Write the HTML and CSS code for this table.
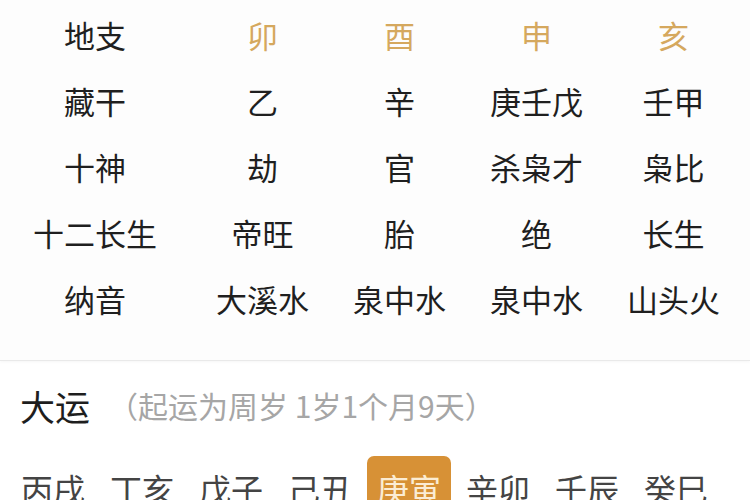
FILE: index.html
```html
<!DOCTYPE html>
<html lang="zh-CN">
<head>
<meta charset="utf-8">
<link rel="stylesheet" href="styles.css">
</head>
<body>
<section class="chart">
  <div class="grid">
    <div class="label">地支</div><div class="cell gold">卯</div><div class="cell gold">酉</div><div class="cell gold">申</div><div class="cell gold">亥</div>
    <div class="label">藏干</div><div class="cell">乙</div><div class="cell">辛</div><div class="cell">庚壬戊</div><div class="cell">壬甲</div>
    <div class="label">十神</div><div class="cell">劫</div><div class="cell">官</div><div class="cell">杀枭才</div><div class="cell">枭比</div>
    <div class="label">十二长生</div><div class="cell">帝旺</div><div class="cell">胎</div><div class="cell">绝</div><div class="cell">长生</div>
    <div class="label">纳音</div><div class="cell">大溪水</div><div class="cell">泉中水</div><div class="cell">泉中水</div><div class="cell">山头火</div>
  </div>
</section>
<section class="dayun">
  <div class="head">
    <span class="title">大运</span>
    <span class="sub">（起运为周岁 1岁1个月9天）</span>
  </div>
  <div class="list">
    <div class="item">丙戌</div>
    <div class="item">丁亥</div>
    <div class="item">戊子</div>
    <div class="item">己丑</div>
    <div class="item active">庚寅</div>
    <div class="item">辛卯</div>
    <div class="item">壬辰</div>
    <div class="item">癸巳</div>
  </div>
</section>
</body>
</html>
```

FILE: styles.css
```css
html, body {
  margin: 0;
  padding: 0;
  background: #ffffff;
  overflow: hidden;
}
body {
  width: 750px;
  height: 500px;
  font-family: "Noto Sans CJK SC", "Noto Sans", sans-serif;
  color: #1f1f1f;
}
.chart {
  background: #fdfdfd;
  padding-top: 1px;
  height: 359px;
  border-bottom: 1px solid #e9e9e9;
  box-shadow: 0 1px 3px rgba(0,0,0,0.04);
}
.grid {
  display: grid;
  grid-template-columns: 194px repeat(4, 137px);
  grid-auto-rows: 66px;
  font-size: 31px;
}
.label, .cell {
  display: flex;
  align-items: center;
  justify-content: center;
  white-space: nowrap;
}
.label {
  padding-right: 4px;
}
.gold {
  color: #d5a85e;
}
.dayun {
  padding-top: 22px;
}
.head {
  display: flex;
  align-items: center;
  height: 44px;
  padding-left: 20px;
}
.title {
  font-size: 35px;
  color: #1e1e1e;
}
.sub {
  font-size: 30px;
  color: #a6a6a6;
  margin-left: 18px;
}
.list {
  display: flex;
  gap: 5px;
  padding-left: 11px;
  margin-top: 29px;
}
.item {
  width: 84px;
  height: 64px;
  flex: none;
  display: flex;
  align-items: center;
  justify-content: center;
  font-size: 32px;
  color: #444444;
  border-radius: 7px;
}
.item.active {
  background: #d79136;
  color: #fbecd4;
}
```
